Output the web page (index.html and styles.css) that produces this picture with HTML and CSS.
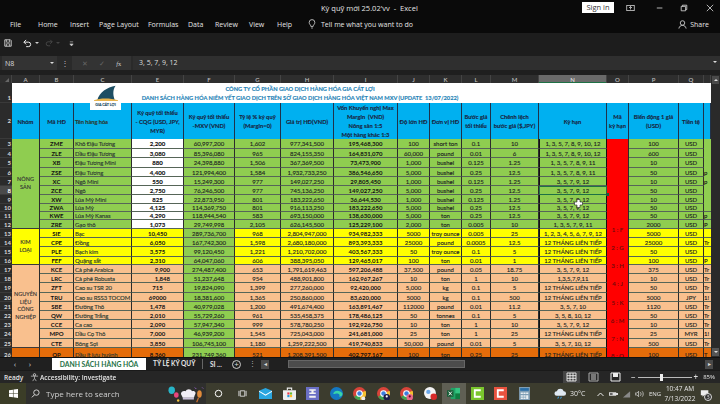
FILE: index.html
```html
<!DOCTYPE html>
<html lang="vi">
<head>
<meta charset="utf-8">
<title>Kỳ quỹ mới 25.02'vv - Excel</title>
<link rel="stylesheet" href="styles.css">
</head>
<body>
<div class="app">
  <header class="titlebar">
    <div class="title">Kỳ quỹ mới 25.02'vv &nbsp;-&nbsp; Excel</div>
    <div class="winctl">
      <span class="signin">Sign in</span>
      <svg class="wi wi-a" viewBox="0 0 12 10"><rect x="1" y="1.5" width="10" height="7" fill="none" stroke="#ddd"/><path d="M6 7V3M4 5l2-2 2 2" fill="none" stroke="#ddd"/></svg>
      <svg class="wi wi-b" viewBox="0 0 10 10"><path d="M1 5h7" stroke="#ddd"/></svg>
      <svg class="wi wi-b" viewBox="0 0 10 10"><path d="M1.5 3h5.5v5.500h-5.500zM3 3V1.500h5.500V7H7" fill="none" stroke="#ddd"/></svg>
      <svg class="wi wi-c" viewBox="0 0 10 10"><path d="M1 1l8 8M9 1l-8 8" stroke="#ddd"/></svg>
    </div>
  </header>
  <nav class="tabs">
    <span class="t-file">File</span><span class="t-home">Home</span><span class="t-ins">Insert</span><span class="t-pl">Page Layout</span><span class="t-for">Formulas</span><span class="t-dat">Data</span><span class="t-rev">Review</span><span class="t-vie">View</span><span class="t-hel">Help</span>
    <svg class="bulb" viewBox="0 0 10 12"><path d="M3.500 9C3.500 7 1.500 6.500 1.500 4a3.500 3.500 0 0 1 7 0C8.500 6.500 6.500 7 6.500 9zM4 11h2" fill="none" stroke="#ddd"/></svg>
    <span class="tell">Tell me what you want to do</span>
    <span class="share"><svg class="person" viewBox="0 0 10 10"><circle cx="5" cy="3.300" r="2.500" fill="none" stroke="#ccc"/><path d="M1 9.500c.5-2.500 2-3.500 4-3.500s3.500 1 4 3.500" fill="none" stroke="#ccc"/></svg>Share</span>
  </nav>
  <div class="qat">
    <svg class="q-save" viewBox="0 0 10 10"><path d="M1 1h7l1 1v7H1z" fill="none" stroke="#eee"/><path d="M3 1v3h4V1M3 9V6h4v3" fill="none" stroke="#eee" stroke-width=".8"/></svg>
    <svg class="q-undo" viewBox="0 0 10 10"><path d="M3.500 1L1 3.500 3.500 6M1 3.500h5a2.500 2.500 0 0 1 0 5H3.500" fill="none" stroke="#eee" stroke-width="1.100"/></svg>
    <span class="q-caret"></span>
    <svg class="q-redo" viewBox="0 0 10 10"><path d="M6.500 1L9 3.500 6.500 6M9 3.500H4a2.500 2.500 0 0 0 0 5h2.500" fill="none" stroke="#4a4a4a" stroke-width="1.100"/></svg>
    <span class="q-caret dim"></span>
    <svg class="q-more" viewBox="0 0 6 8"><path d="M1 2h4M1 4.500h4L3 7z" stroke="#ccc" fill="#ccc" stroke-width=".7"/></svg>
  </div>
  <div class="fbar">
    <div class="namebox"><span>N8</span><i class="caret"></i></div>
    <div class="dots">⋮</div>
    <div class="fbtns"><span class="fb-x">✕</span><span class="fb-c">✓</span><span class="fb-f"><i>f</i>x</span></div>
    <div class="finput">3, 5, 7, 9, 12</div>
    <i class="caret fb-exp"></i>
  </div>
  <div class="sheetarea">
    <div class="grid">
      <table class="sheet">
        <colgroup>
          <col class="c-rh"><col class="c-a"><col class="c-b"><col class="c-c"><col class="c-e"><col class="c-f"><col class="c-g"><col class="c-h"><col class="c-i"><col class="c-j"><col class="c-k"><col class="c-l"><col class="c-m"><col class="c-n"><col class="c-o"><col class="c-p"><col class="c-q"><col class="c-r">
        </colgroup>
        <thead>
          <tr class="colhead">
            <th class="corner"><i></i></th><th>A</th><th>B</th><th>C</th><th class="gap">E</th><th>F</th><th>G</th><th>H</th><th>I</th><th>J</th><th>K</th><th>L</th><th>M</th><th class="cur">N</th><th>O</th><th>P</th><th>Q</th><th></th>
          </tr>
        </thead>
        <tbody>
          <tr class="r1">
            <th>1</th>
            <td colspan="3" class="logocell">
              <div class="logo">
                <svg viewBox="0 0 30 20"><path d="M4 19C7 9 16 3 27 1c-3 4-4 10-1 18z" fill="#1d4e63"/><path d="M0 19c8-3 20-3 30 0v1H0z" fill="#e9b44c"/></svg>
                <span>GIA CÁT LỢI</span>
              </div>
            </td>
            <td colspan="7" class="banner">
              <div>CÔNG TY CỔ PHẦN GIAO DỊCH HÀNG HÓA GIA CÁT LỢI</div>
              <div>DANH SÁCH HÀNG HÓA NIÊM YẾT GIAO DỊCH TRÊN SỞ GIAO DỊCH HÀNG HÓA VIỆT NAM MXV (UPDATE &nbsp;13/07/2022)</div>
            </td>
            <td colspan="7" class="blank"></td>
          </tr>
          <tr class="r2">
            <th>2</th>
            <td>Nhóm</td><td>Mã HĐ</td><td class="l">Tên hàng hóa</td><td>Ký quỹ tối thiểu<br>- CQG (USD, JPY,<br>MYR)</td><td>Ký quỹ tối thiểu<br>-MXV (VND)</td><td>Tỷ lệ % ký quỹ<br>(Margin=0)</td><td>Giá trị HĐ(VND)</td><td>Vốn Khuyến nghị Max<br>Margin &nbsp;(VND)<br>Nông sản 1:5<br>Một hàng khác 1:3</td><td>Độ lớn HĐ</td><td>Đơn vị HĐ</td><td>Bước giá<br>tối thiểu</td><td>Chênh lệch<br>bước giá ($,JPY)</td><td>Kỳ hạn</td><td>Mã<br>kỳ hạn</td><td>Biến động 1 giá<br>(USD)</td><td>Tiền tệ</td><td></td>
          </tr>
          <tr class="h10 g"><th>3</th><td rowspan="10" class="grp">NÔNG<br>SẢN</td><td class="b">ZME</td><td class="l">Khô Đậu Tương</td><td class="w">2,200</td><td>60,997,200</td><td>1,602</td><td>977,341,500</td><td class="b">195,468,300</td><td>100</td><td>short ton</td><td>0.1</td><td>10</td><td class="n">1, 3, 5, 7, 8, 9, 10, 12</td><td rowspan="9" class="red"></td><td>100</td><td>USD</td><td class="rc nb"></td></tr>
          <tr class="h9 g"><th>4</th><td class="b">ZLE</td><td class="l">Dầu Đậu Tương</td><td class="w">3,080</td><td>85,396,080</td><td>965</td><td>824,155,350</td><td class="b">164,831,070</td><td>60,000</td><td>pound</td><td>0.01</td><td>6</td><td class="n">1, 3, 5, 7, 8, 9, 10, 12</td><td>600</td><td>USD</td><td class="rc nb"></td></tr>
          <tr class="h10 g"><th>5</th><td class="b">XB</td><td class="l">Đậu Tương Mini</td><td class="w">880</td><td>24,398,880</td><td>1,506</td><td>367,369,500</td><td class="b">73,473,900</td><td>1,000</td><td>bushel</td><td>0.125</td><td>1.25</td><td class="n">1, 3, 5, 7, 8, 9, 11</td><td>10</td><td>USD</td><td class="rc nb"></td></tr>
          <tr class="h9 g"><th>6</th><td class="b">ZSE</td><td class="l">Đậu Tương</td><td class="w">4,400</td><td>121,994,400</td><td>1,584</td><td>1,932,733,250</td><td class="b">386,546,650</td><td>5,000</td><td>bushel</td><td>0.25</td><td>12.5</td><td class="n">1, 3, 5, 7, 8, 9, 11</td><td>50</td><td>USD</td><td class="rc nb">p</td></tr>
          <tr class="h9 g"><th>7</th><td class="b">XC</td><td class="l">Ngô Mini</td><td class="w">550</td><td>15,249,300</td><td>977</td><td>149,027,250</td><td class="b">29,805,450</td><td>1,000</td><td>bushel</td><td>0.125</td><td>1.25</td><td class="n">3, 5, 7, 9, 12</td><td>10</td><td>USD</td><td class="rc nb">p</td></tr>
          <tr class="h9 g"><th class="currow">8</th><td class="b">ZCE</td><td class="l">Ngô</td><td class="w">2,750</td><td>76,246,500</td><td>977</td><td>745,136,250</td><td class="b">149,027,250</td><td>5,000</td><td>bushel</td><td>0.25</td><td>12.5</td><td class="n sel">3, 5, 7, 9, 12<i class="handle"></i></td><td>50</td><td>USD</td><td class="rc nb"></td></tr>
          <tr class="h9 g"><th>9</th><td class="b">XW</td><td class="l">Lúa Mỳ Mini</td><td class="w">825</td><td>22,873,950</td><td>801</td><td>183,222,650</td><td class="b">36,644,530</td><td>1,000</td><td>bushel</td><td>0.125</td><td>1.25</td><td class="n">3, 5, 7, 9, 12</td><td>10</td><td>USD</td><td class="rc nb"></td></tr>
          <tr class="h8 g"><th>10</th><td class="b">ZWA</td><td class="l">Lúa Mỳ</td><td class="w">4,125</td><td>114,369,750</td><td>801</td><td>916,113,250</td><td class="b">183,222,650</td><td>5,000</td><td>bushel</td><td>0.25</td><td>12.5</td><td class="n">3, 5, 7, 9, 12</td><td>50</td><td>USD</td><td class="rc"></td></tr>
          <tr class="h8 g"><th>11</th><td class="b">KWE</td><td class="l">Lúa Mỳ Kanas</td><td class="w">4,290</td><td>118,944,540</td><td>583</td><td>693,150,000</td><td class="b">138,630,000</td><td>5,000</td><td>ton</td><td>0.25</td><td>12.5</td><td class="n">3, 5, 7, 9, 12</td><td>50</td><td>USD</td><td class="rc">p</td></tr>
          <tr class="h9 g"><th>12</th><td class="b">ZRE</td><td class="l">Gạo thô</td><td class="w">1,073</td><td>29,749,998</td><td>2,105</td><td>626,145,500</td><td class="b">125,229,100</td><td>2,000</td><td>ton</td><td>0.005</td><td>10</td><td class="n">1, 3, 5, 7, 9, 11</td><td rowspan="2" class="red">1 : F</td><td>2000</td><td>USD</td><td class="rc">P</td></tr>
          <tr class="h9 y"><th>13</th><td rowspan="4" class="grp">KIM<br>LOẠI</td><td class="b">SIE</td><td class="l">Bạc</td><td class="b">10,450</td><td class="f">289,736,700</td><td>968</td><td>2,804,947,000</td><td class="b">934,982,333</td><td>5000</td><td>troy ounce</td><td>0.005</td><td>25</td><td class="n">1, 2, 3, 4, 5, 6, 7, 9, 12</td><td>5000</td><td>USD</td><td class="rc"></td></tr>
          <tr class="h9 y"><th>14</th><td class="b">CPE</td><td class="l">Đồng</td><td class="b">6,050</td><td class="f">167,742,300</td><td>1,598</td><td>2,680,180,000</td><td class="b">893,393,333</td><td>25000</td><td>pound</td><td>0.0005</td><td>12.5</td><td class="n">12 THÁNG LIÊN TIẾP</td><td rowspan="2" class="red">2 : G</td><td>25000</td><td>USD</td><td class="rc">Tr</td></tr>
          <tr class="h10 y"><th>15</th><td class="b">PLE</td><td class="l">Bạch kim</td><td class="b">3,575</td><td class="f">99,120,450</td><td>1,221</td><td>1,210,702,000</td><td class="b">403,567,333</td><td>50</td><td>troy ounce</td><td>0.1</td><td>5</td><td class="n">12 THÁNG LIÊN TIẾP</td><td>50</td><td>USD</td><td class="rc"></td></tr>
          <tr class="h8 y"><th>16</th><td class="b">FEF</td><td class="l">Quặng sắt</td><td class="b">2,310</td><td class="f">64,047,060</td><td>606</td><td>388,395,050</td><td class="b">129,465,017</td><td>100</td><td>ton</td><td>0.01</td><td>1</td><td class="n">12 THÁNG LIÊN TIẾP</td><td rowspan="2" class="red">3 : H</td><td>100</td><td>USD</td><td class="rc">P</td></tr>
          <tr class="h9 p"><th>17</th><td rowspan="9" class="grp">NGUYÊN<br>LIỆU<br>CÔNG<br>NGHIỆP</td><td class="b">KCE</td><td class="l">Cà phê Arabica</td><td class="bi">9,900</td><td class="f">274,487,400</td><td>653</td><td>1,791,619,463</td><td class="b">597,206,488</td><td>37,500</td><td>pound</td><td>0.05</td><td>18.75</td><td class="n">3, 5, 7, 9, 12</td><td>375</td><td>USD</td><td class="rc">Tr</td></tr>
          <tr class="h9 p"><th>18</th><td class="b">LRC</td><td class="l">Cà phê Robusta</td><td class="bi">1,848</td><td class="f">51,237,648</td><td>954</td><td>488,901,800</td><td class="b">162,967,267</td><td>10</td><td>ton</td><td>1</td><td>10</td><td class="n">1,3,5,7,9,11</td><td rowspan="2" class="red">4 : J</td><td>10</td><td>USD</td><td class="rc">Tr</td></tr>
          <tr class="h10 p"><th>19</th><td class="b">ZFT</td><td class="l">Cao su TSR 20</td><td class="b">715</td><td class="f">19,824,090</td><td>1,399</td><td>277,260,000</td><td class="b">92,420,000</td><td>5,000</td><td>kg</td><td>0.1</td><td>5</td><td class="n">12 THÁNG LIÊN TIẾP</td><td>50</td><td>USD</td><td class="rc">Tr</td></tr>
          <tr class="h9 p"><th>20</th><td class="b">TRU</td><td class="l">Cao su RSS3 TOCOM</td><td class="b">69000</td><td class="f">18,381,600</td><td>1,365</td><td>250,860,000</td><td class="b">83,620,000</td><td>5000</td><td>kg</td><td>0.1</td><td>500</td><td class="n">12 THÁNG LIÊN TIẾP</td><td rowspan="2" class="red">5 : K</td><td>5000</td><td>JPY</td><td class="rc">1!</td></tr>
          <tr class="h9 p"><th>21</th><td class="b">SBE</td><td class="l">Đường Thô</td><td class="b">1,478</td><td class="f">40,979,028</td><td>1,200</td><td>491,674,400</td><td class="b">163,891,467</td><td>112000</td><td>pound</td><td>0.01</td><td>11.2</td><td class="n">3, 5, 7, 10</td><td>1120</td><td>USD</td><td class="rc">Tr</td></tr>
          <tr class="h9 p"><th>22</th><td class="b">QW</td><td class="l">Đường Trắng</td><td class="b">2,010</td><td class="f">55,729,260</td><td>961</td><td>535,458,375</td><td class="b">178,486,125</td><td>50</td><td>tonnes</td><td>0.1</td><td>5</td><td class="n">3, 5, 8, 10, 12</td><td rowspan="2" class="red">6 : M</td><td>50</td><td>USD</td><td class="rc">Tr</td></tr>
          <tr class="h9 p"><th>23</th><td class="b">CCE</td><td class="l">Ca cao</td><td class="b">2,090</td><td class="f">57,947,340</td><td>999</td><td>578,780,250</td><td class="b">192,926,750</td><td>10</td><td>ton</td><td>1</td><td>10</td><td class="n">3, 5, 7, 9, 12</td><td>10</td><td>USD</td><td class="rc">Tr</td></tr>
          <tr class="h10 p"><th>24</th><td class="b">MPO</td><td class="l">Dầu Cọ Thô</td><td class="b">7,000</td><td class="f">46,939,200</td><td>1,545</td><td>725,043,000</td><td class="b">241,681,000</td><td>25</td><td>ton</td><td>1</td><td>25</td><td class="n">12 THÁNG LIÊN TIẾP</td><td rowspan="2" class="red">7 : N</td><td>25</td><td>MYR</td><td class="rc">1!</td></tr>
          <tr class="h9 p"><th>25</th><td class="b">CTE</td><td class="l">Bông Sợi</td><td class="b">3,850</td><td class="f">106,745,100</td><td>1,180</td><td>1,259,222,500</td><td class="b">419,740,833</td><td>50,000</td><td>pound</td><td>0.01</td><td>5</td><td class="n">3, 5, 7, 10, 12</td><td>500</td><td>USD</td><td class="rc">Tr</td></tr>
          <tr class="h14 o"><th>26</th><td class="grp"></td><td class="b">QP</td><td class="l">Dầu ít lưu huỳnh</td><td class="b">8,360</td><td class="f">231,749,360</td><td>521</td><td>1,208,391,500</td><td class="b">402,797,167</td><td>100</td><td>ton</td><td>0.25</td><td>25</td><td class="n">12 THÁNG LIÊN TIẾP</td><td class="red">8 : Q</td><td>100</td><td>USD</td><td class="rc">T</td></tr>
        </tbody>
      </table>
      <svg class="cursor" viewBox="0 0 9 9"><path d="M3 .5h3v2.500h2.500v3H6v2.500H3V6H.5V3H3z" fill="#fff" stroke="#222" stroke-width=".6"/></svg>
    </div>
    <div class="vscroll">
      <span class="vbtn up"></span>
      <span class="vtrack"></span>
      <span class="vbtn down"></span>
    </div>
  </div>
  <div class="tabbar">
    <span class="nav">‹</span><span class="nav">›</span>
    <span class="stab active">DANH SÁCH HÀNG HÓA</span>
    <span class="stab next">TỶ LỆ KÝ QUỸ</span>
    <span class="stab si">SI ...</span>
    <span class="addsheet">+</span>
    <span class="vdots">⋮</span>
    <span class="hbtn">◂</span>
    <span class="hthumb"></span>
    <span class="hbtn end">▸</span>
  </div>
  <div class="status">
    <span class="ready">Ready</span>
    <svg class="acc" viewBox="0 0 10 10"><circle cx="5" cy="2" r="1.300" fill="none" stroke="#ccc"/><path d="M1 3.500h8M5 4v2L3 9M5 6l2 3" fill="none" stroke="#ccc" stroke-width=".8"/></svg>
    <span class="accessibility">Accessibility: Investigate</span>
    <div class="views">
      <svg class="view on" viewBox="0 0 17 12"><path d="M4 2h9v8H4zM7 2v8M10 2v8M4 4.700h9M4 7.300h9" fill="none" stroke="#eee" stroke-width=".9"/></svg>
      <svg class="view" viewBox="0 0 17 12"><path d="M4 2h9v8H4z" fill="none" stroke="#aaa"/><path d="M6 3h5v6H6z" fill="#777"/></svg>
      <svg class="view" viewBox="0 0 17 12"><path d="M4 2h9v8H4z" fill="none" stroke="#eee"/><path d="M6 2h5v4H6z" fill="#eee"/></svg>
    </div>
    <div class="zoomctl">
      <span class="zm">−</span><span class="zslider"><i></i></span><span class="zm">+</span><span class="zpct">85%</span>
    </div>
  </div>
  <footer class="taskbar">
    <div class="start"><svg viewBox="0 0 10 10"><path d="M0 1.400L4.400.7v3.900H0zM5 .6L10 0v4.600H5zM0 5.300h4.400v3.900L0 8.600zM5 5.300h5V10L5 9.300z" fill="#fff"/></svg></div>
    <div class="search">
      <svg class="lens" viewBox="0 0 10 10"><circle cx="6" cy="4" r="3" fill="none" stroke="#ddd"/><path d="M4 6.300L1 9.300" stroke="#ddd" stroke-width="1.100"/></svg>
      <span class="stext">Type here to search</span>
      <svg class="doodle" viewBox="0 0 40 18"><ellipse cx="4" cy="5" rx="3.500" ry="4" fill="#28b5c8"/><ellipse cx="9" cy="10" rx="2.500" ry="3" fill="#e8467c"/><circle cx="11" cy="16" r="1.300" fill="#f2c23e"/><path d="M14 9c0-3 3-4 5-3 1-3 6-3 7 0 3-1 5 2 3 4l-1 3H16z" fill="#f2eef5"/><path d="M16 13h12v2H16z" fill="#c9bfd6"/><ellipse cx="34" cy="9" rx="2.500" ry="4" fill="#e08a3a"/><path d="M33 13l-2 5" stroke="#c46a2a" stroke-width="1.400"/><path d="M29 2l1.500 1.500M37 2l1 1" stroke="#a06ad8"/></svg>
    </div>
    <div class="apps">
      <span class="app-i"><svg viewBox="0 0 10 10"><circle cx="5" cy="5" r="3.600" fill="none" stroke="#fff" stroke-width="1.100"/></svg></span>
      <span class="app-i"><svg viewBox="0 0 10 10"><path d="M2.500 2h5v6h-5z" fill="none" stroke="#ddd"/><path d="M1 2v6M9 2v6" stroke="#ddd"/></svg></span>
      <span class="app-i"><svg viewBox="0 0 14 12"><path d="M0 3l7-3 7 3v9H0z" fill="#2aa6e0"/><path d="M0 3l7 4 7-4v1L7 8.500 0 4z" fill="#fff"/></svg></span>
      <span class="app-i"><svg viewBox="0 0 12 12"><path d="M0 3h12v8a1 1 0 0 1-1 1H1a1 1 0 0 1-1-1z" fill="#eee"/><path d="M4 3V1h4v2" fill="none" stroke="#eee"/><path d="M4 5h2v2H4z" fill="#e34"/><path d="M6.400 5h2v2h-2z" fill="#6b3"/><path d="M4 7.400h2v2H4z" fill="#29d"/><path d="M6.400 7.400h2v2h-2z" fill="#fb2"/></svg></span>
      <span class="app-i"><svg viewBox="0 0 12 12"><path d="M0 0h12v12H0z" fill="#6a6fc4"/><path d="M3 2h6v1.500H7V5h2v1.500H3V5h2V3.500H3zM3 8h6v2H3z" fill="#f2f2f2"/></svg></span>
      <span class="app-i"><svg viewBox="0 0 12 12"><circle cx="6" cy="6" r="6" fill="#1477c2"/><path d="M3 6.500C3 3 9 2 11.500 6c.3 2-1.500 3-3 3 1-2-.5-3-2-3-1.200 0-2 .5-3.500.5z" fill="#39d5a8"/></svg></span>
      <span class="app-i"><svg viewBox="0 0 12 12"><circle cx="6" cy="6" r="6" fill="#d8443a"/><path d="M6 6L1 9a6 6 0 0 0 6 3z" fill="#3fa452"/><path d="M6 6l5.500-2.500A6 6 0 0 1 7 12z" fill="#f4c030"/><circle cx="6" cy="6" r="2.600" fill="#3b7fe0" stroke="#fff"/><circle cx="9.500" cy="10.500" r="1.800" fill="#eee"/></svg></span>
      <span class="app-i"><svg viewBox="0 0 12 12"><circle cx="6" cy="6" r="6" fill="#d8443a"/><path d="M6 6L1 9a6 6 0 0 0 6 3z" fill="#3fa452"/><path d="M6 6l5.500-2.500A6 6 0 0 1 7 12z" fill="#f4c030"/><circle cx="6" cy="6" r="2.600" fill="#3b7fe0" stroke="#fff"/><circle cx="9" cy="9.500" r="3" fill="#1c1c4a"/><circle cx="9" cy="8.700" r="1" fill="#fff"/></svg></span>
      <span class="app-i"><svg viewBox="0 0 12 12"><circle cx="6" cy="6" r="6" fill="#d8443a"/><path d="M6 6L1 9a6 6 0 0 0 6 3z" fill="#3fa452"/><path d="M6 6l5.500-2.500A6 6 0 0 1 7 12z" fill="#f4c030"/><circle cx="6" cy="6" r="2.600" fill="#3b7fe0" stroke="#fff"/><circle cx="9" cy="9.500" r="3" fill="#e8678a"/><circle cx="9" cy="8.700" r="1" fill="#602"/></svg></span>
      <span class="app-i"><svg viewBox="0 0 12 12"><circle cx="5.500" cy="5.500" r="5.500" fill="#f4f4f4"/><circle cx="4" cy="4.500" r="2" fill="#6aa7e8"/><circle cx="9" cy="9" r="3" fill="#d82a2a"/></svg></span>
      <span class="app-i cur-app"><svg viewBox="0 0 14 12"><path d="M4 0h10v12H4z" fill="#21a366"/><path d="M9 0h5v6H9z" fill="#33c481"/><path d="M9 6h5v6H9z" fill="#107c41"/><path d="M0 2.500h7v7H0z" fill="#185c37"/><path d="M1.800 4l3.400 4M5.200 4L1.800 8" stroke="#fff"/></svg></span>
      <span class="app-i"><svg viewBox="0 0 12 12"><path d="M0 0h12v12H0z" fill="#7bc62d"/><path d="M9 3H3.500v6H9" fill="none" stroke="#fff" stroke-width="1.700"/></svg></span>
      <span class="app-i"><svg viewBox="0 0 12 12"><path d="M0 0h12v12H0z" fill="#e8533f"/><path d="M9 3H3.500v6H9" fill="none" stroke="#fff" stroke-width="1.700"/></svg></span>
      <span class="app-i"><svg viewBox="0 0 10 12"><path d="M0 0h10v12H0z" fill="#7f9eb5"/><path d="M1 1h8v2.500H1z" fill="#2a6fa8"/><path d="M1.500 5h2v1.500h-2zM4 5h2v1.500H4zM6.500 5h2v1.500h-2zM1.500 7.500h2V9h-2zM4 7.500h2V9H4zM6.500 7.500h2V11h-2zM1.500 9.700h2V11h-2zM4 9.700h2V11H4z" fill="#e8eef2"/></svg></span>
    </div>
    <div class="tray">
      <svg class="cloud" viewBox="0 0 14 12"><path d="M3 8a2.500 2.500 0 0 1 0-5 4 4 0 0 1 7.500 0 2.500 2.500 0 0 1 0 5z" fill="#dfe8f2"/><path d="M5 9l-1 2M8 9l-1 2" stroke="#3aa0e8" stroke-width="1.100"/></svg>
      <span class="temp">30°C</span>
      <svg class="tr-i up" viewBox="0 0 8 8"><path d="M1 6l3-3 3 3" fill="none" stroke="#eee"/></svg>
      <svg class="tr-i" viewBox="0 0 10 8"><path d="M0 2h8v4H0zM8 3h2v2H8z" fill="#ddd"/><path d="M1 3h3v2H1z" fill="#555"/></svg>
      <svg class="tr-i" viewBox="0 0 10 8"><path d="M1 8l8-7v7z" fill="#888"/></svg>
      <svg class="tr-i" viewBox="0 0 10 8"><path d="M0 3h2l2-2v6L2 5H0z" fill="none" stroke="#ddd" stroke-width=".8"/><path d="M6 2c1 1 1 3 0 4M8 1c1.500 1.500 1.500 4.500 0 6" fill="none" stroke="#ddd" stroke-width=".8"/></svg>
      <span class="eng">ENG</span>
      <span class="clock">10:47 AM<br>7/13/2022</span>
      <span class="notif"><svg viewBox="0 0 12 10"><path d="M1 1h9v6H5L3 9V7H1z" fill="#eee"/></svg><b>3</b></span>
    </div>
  </footer>
</div>
</body>
</html>
```

FILE: styles.css
```css
* { box-sizing: border-box; }
html, body { margin: 0; padding: 0; background: #000; }
body { width: 720px; height: 404px; overflow: hidden; }
.app {
  width: 720px; height: 404px; display: flex; flex-direction: column;
  font-family: "Open Sans", "Liberation Sans", sans-serif; color: #e4e4e4;
  filter: blur(.35px);
}
svg { display: block; flex: none; }

/* title */
.titlebar { height: 18px; background: #0a0a0a; position: relative; display: flex; align-items: center; justify-content: flex-end; }
.title { position: absolute; left: 321px; top: 3px; font-size: 7.500px; line-height: 10px; white-space: nowrap; }
.winctl { display: flex; align-items: center; height: 14px; margin-top: -3px; padding-right: 6px; }
.signin { width: 32px; height: 11px; background: #fff; color: #333; font-size: 7.500px; line-height: 11px; text-align: center; margin-right: 12px; }
.wi { width: 8px; height: 8px; }
.wi-a { width: 9px; margin-right: 21px; }
.wi-b { margin-right: 16px; }
.wi-c { margin-left: 2px; }

.tabs { height: 15px; background: #0a0a0a; display: flex; align-items: center; font-size: 7px; padding-left: 10px; white-space: nowrap; padding-bottom: 3px; }
.tabs > span { display: block; }
.t-file { width: 28px; } .t-home { width: 32px; } .t-ins { width: 29px; } .t-pl { width: 49px; } .t-for { width: 40px; } .t-dat { width: 27px; } .t-rev { width: 34px; } .t-vie { width: 28px; } .t-hel { width: 28px; }
.bulb { width: 8px; height: 10px; margin-left: 3px; margin-right: 5px; }
.tell { flex: 1; }
.share { display: flex !important; align-items: center; gap: 3px; margin-right: 11px; font-size: 7px; }
.person { width: 9px; height: 9px; }

.qat { height: 22px; background: #1d1d1d; display: flex; align-items: center; padding-left: 4px; padding-bottom: 2px; }
.q-save { width: 8px; height: 8px; margin-right: 11px; }
.q-undo { width: 9px; height: 9px; margin-left: 0; }
.q-caret { width: 0; height: 0; border: 2px solid transparent; border-top-color: #ccc; border-bottom: 0; margin: 0 6px 0 3px; }
.q-caret.dim { border-top-color: #444; margin: 0 9px 0 3px; }
.q-redo { width: 8px; height: 8px; margin-right: 0; }
.q-more { width: 5px; height: 7px; }

.fbar { height: 20px; border-top: 1px solid #1d1d1d; display: flex; align-items: stretch; padding-bottom: 5px; font-size: 7px; background: linear-gradient(#2a2a2a 0 14px, #1f1f1f 14px); }
.namebox { width: 55px; margin-left: 2px; background: #333; display: flex; align-items: center; justify-content: space-between; padding: 0 3px; color: #ddd; }
.caret { display: block; width: 0; height: 0; border: 2px solid transparent; border-top-color: #ddd; border-bottom: 0; }
.dots { width: 15px; text-align: center; color: #bbb; line-height: 14px; font-size: 8px; }
.fbtns { width: 59px; background: #333; display: flex; align-items: center; justify-content: space-around; padding: 0 4px; }
.fb-x, .fb-c { color: #666; font-size: 7px; } .fb-f { color: #ccc; font-size: 6.500px; font-family: "Liberation Serif", serif; }
.finput { flex: 1; margin-left: 2px; background: #2f2f2f; padding-left: 6px; line-height: 14px; color: #ddd; }
.fb-exp { position: absolute; right: 3px; top: 61px; }

/* sheet */
.sheetarea { height: 282px; display: flex; overflow: hidden; background: #222; }
.grid { width: 711px; height: 282px; overflow: hidden; position: relative; }
.sheet { border-collapse: separate; border-spacing: 0; table-layout: fixed; width: 711px; font-family: Lato, "Liberation Sans", sans-serif; font-size: 6px; line-height: 7px; color: #1c2420; }
.c-rh { width: 12px; } .c-a { width: 28px; } .c-b { width: 34px; } .c-c { width: 58px; } .c-e { width: 52px; } .c-f { width: 51px; } .c-g { width: 46px; } .c-h { width: 53px; } .c-i { width: 64px; } .c-j { width: 32px; } .c-k { width: 32px; } .c-l { width: 29px; } .c-m { width: 48px; } .c-n { width: 68px; } .c-o { width: 22px; } .c-p { width: 50px; } .c-q { width: 25px; } .c-r { width: 7px; }
.sheet th { padding: 0; font-weight: 700; background: #2b2b2b; color: #d8d8d8; font-size: 6px; line-height: 7px; overflow: hidden; text-align: right; padding-right: 1px; border-bottom: 1px solid #3a3a3a; }
.sheet td { padding: 0; text-align: center; vertical-align: middle; white-space: nowrap; overflow: hidden; border-right: 1px solid #2c2c2c; border-bottom: 1px solid #566558; font-weight: 400; -webkit-text-stroke: .12px currentColor; }
.colhead { height: 8px; }
.colhead th { text-align: center; padding: 0; font-weight: 600; background: #2e2e2e; color: #bdbdbd; border-bottom: 0; border-right: 1px solid #444; height: 8px; }
.colhead .cur { background: #6a6a6a; color: #ddd; box-shadow: inset 0 -1px #1e7145; }
.corner { position: relative; }
.corner i { position: absolute; right: 2px; bottom: 1px; width: 0; height: 0; border-left: 4px solid transparent; border-bottom: 4px solid #666; }
.r1 { height: 20px; }
.r1 td { background: #fff; border-right: 0; border-bottom: 0; }
.sheet .r1 th { vertical-align: bottom; padding-bottom: 1px; }
.logocell { position: relative; overflow: visible !important; }
.logo { position: absolute; left: 78px; top: 1px; width: 31px; height: 27px; z-index: 2; display: flex; flex-direction: column; align-items: center; }
.logo svg { width: 24px; height: 18px; }
.logo span { display: block; width: 31px; height: 9px; margin-top: -1px; background: #fff; color: #1d4e63; font-size: 3.600px; line-height: 8px; text-align: center; font-weight: 700; }
.sheet .banner { color: #2382b6; font-weight: 700; font-size: 5.700px; line-height: 9px; padding-left: 6px; overflow: visible; }
.r2 { height: 36px; }
.r2 td { background: #00b0f0; white-space: nowrap; font-size: 5.800px; line-height: 9px; color: #1a2440; font-weight: 700; border-right: 1px solid #20324a; border-bottom: 0; padding: 0; }
.r2 .l { text-align: left; padding-left: 1px; }
.h8 { height: 8px; } .h9 { height: 9px; } .h10 { height: 10px; } .h14 { height: 14px; }
.g td { background: #8fcd50; }
.y td { background: #ffff00; }
.p td { background: #f9c08e; }
.o td { background: #e46c0a; }
.sheet .l { text-align: left; padding-left: 1px; color: #2c3a30; letter-spacing: -.1px; }
.sheet .w { background: #fff; font-weight: 700; color: #111; }
.sheet .b { font-weight: 700; color: #111; -webkit-text-stroke: 0; }
.sheet .bi { font-weight: 700; color: #111; text-align: right; padding-right: 13px; -webkit-text-stroke: 0; }
.sheet .f { background: #8fcd50; }
.sheet .n { border-left: 1px solid #111; border-right: 1px solid #111; }
.sheet .red { background: #ff0000; color: #6a0c0c; border-bottom: 0; font-size: 6px; }
.sheet .grp { font-size: 5.500px; line-height: 7.500px; border-bottom: 1px solid #3a3a3a; color: #333; }
.sheet .rc { text-align: left; border-right: 0; color: #111; }
.sheet .nb { border-bottom: 0; }
.sheet .sel { position: relative; box-shadow: inset 0 0 0 1px #1e7145; overflow: visible; border: 0; }
.handle { position: absolute; right: -2px; bottom: -1px; width: 3px; height: 3px; background: #1e5c3a; }
.sheet .currow { background: #4a4a4a; color: #fff; }
.cursor { position: absolute; left: 574px; top: 124px; width: 9px; height: 9px; }

.vscroll { width: 9px; display: flex; flex-direction: column; background: #2a2a2a; padding: 0 1px; }
.vbtn { display: block; height: 8px; background: #4a4a4a; position: relative; margin-top: 1px; }
.vbtn::after { content: ""; position: absolute; left: 2px; top: 3px; border: 2px solid transparent; border-top: 0; border-bottom-color: #ddd; }
.vbtn.down::after { border-bottom: 0; border-top: 2px solid #ddd; }
.vbtn.down { margin-bottom: 1px; background: #555; }
.vtrack { flex: 1; }

/* tabs at bottom */
.tabbar { height: 13px; background: #202020; display: flex; align-items: center; font-size: 7px; border-top: 1px solid #111; }
.nav { width: 15px; text-align: center; color: #ccc; font-size: 8px; line-height: 10px; }
.nav:first-child { margin-left: 7.500px; }
.stab { white-space: nowrap; }
.active { margin-left: 14.500px; width: 94px; height: 12px; background: #fff; color: #1e7145; text-align: center; line-height: 12px; font-family: Lato, sans-serif; font-weight: 700; font-size: 6.800px; }
.next { margin-left: 7px; width: 50px; font-family: Lato, sans-serif; font-size: 6.500px; font-weight: 700; color: #e6e6e6; border-right: 1px solid #666; line-height: 10px; height: 10px; margin-right: 7px; }
.si { width: 22px; font-family: Lato, sans-serif; font-size: 6.500px; font-weight: 700; }
.addsheet { width: 9px; height: 9px; border-radius: 50%; border: 1px solid #ccc; color: #ddd; text-align: center; font-size: 8px; line-height: 6.500px; margin-right: 7px; }
.vdots { width: 8px; color: #bbb; font-size: 7px; line-height: 10px; text-align: center; margin-right: 1px; overflow: hidden; }
.hbtn { width: 8px; height: 9px; background: #4a4a4a; color: #ddd; font-size: 6px; line-height: 9px; text-align: center; margin-left: 4px; }
.hthumb { width: 177px; height: 8px; background: #4c4c4c; border: 1px solid #666; margin-left: 19px; }
.hbtn.end { margin-left: auto; margin-right: 7px; }

.status { height: 13px; background: #262626; display: flex; align-items: center; font-size: 6.500px; font-weight: 600; border-top: 1px solid #1a1a1a; }
.ready { margin-left: 4px; width: 26px; }
.acc { width: 9px; height: 9px; }
.accessibility { margin-left: 1px; }
.views { margin-left: auto; display: flex; align-items: center; height: 13px; }
.view { width: 17px; height: 12px; margin-right: 5px; }
.view.on { background: #444; }
.zoomctl { display: flex; align-items: center; gap: 2px; margin-right: 5px; margin-left: 2px; }
.zm { color: #ddd; font-size: 8px; line-height: 8px; }
.zslider { width: 54px; height: 1px; background: #bbb; position: relative; display: block; }
.zslider i { position: absolute; left: 22px; top: -3px; width: 3px; height: 7px; background: #eee; }
.zpct { font-size: 6px; margin-left: 3px; font-weight: 400; }

.taskbar { height: 21px; background: #3c3c2e; display: flex; align-items: center; }
.start { width: 26px; height: 21px; display: flex; align-items: center; justify-content: center; background: #3b3d27; }
.start svg { width: 9px; height: 9px; }
.search { width: 180px; height: 21px; background: #2f2f2d; display: flex; align-items: center; padding-left: 5px; }
.lens { width: 9px; height: 9px; }
.stext { margin-left: 6px; font-size: 8px; color: #cfcfcf; white-space: nowrap; }
.doodle { width: 37px; height: 18px; margin-left: auto; margin-right: 1px; }
.apps { display: flex; margin-left: 1px; }
.app-i { width: 23.500px; height: 21px; display: flex; align-items: center; justify-content: center; }
.app-i svg { width: 13px; height: 13px; }
.app-i:nth-child(1) svg, .app-i:nth-child(2) svg { width: 9px; height: 9px; }
.cur-app { background: #5f5f54; }
.tray { display: flex; align-items: center; margin-left: auto; height: 21px; font-size: 7px; flex: none; padding-right: 8px; }
.cloud { width: 13px; height: 12px; margin-right: 3px; }
.temp { width: 26px; color: #e4e4e4; }
.tr-i { width: 9px; height: 8px; margin-right: 4px; }
.eng { font-size: 6px; width: 14px; margin-left: 1px; }
.clock { width: 34px; text-align: center; font-size: 6.500px; line-height: 10px; }
.notif { width: 15px; position: relative; display: flex; justify-content: center; }
.notif svg { width: 10px; height: 9px; }
.notif b { position: absolute; right: 0; bottom: -3px; width: 8px; height: 8px; border: 1px solid #ddd; border-radius: 50%; background: #333; font-size: 5.500px; line-height: 6px; text-align: center; font-weight: 500; }
```
